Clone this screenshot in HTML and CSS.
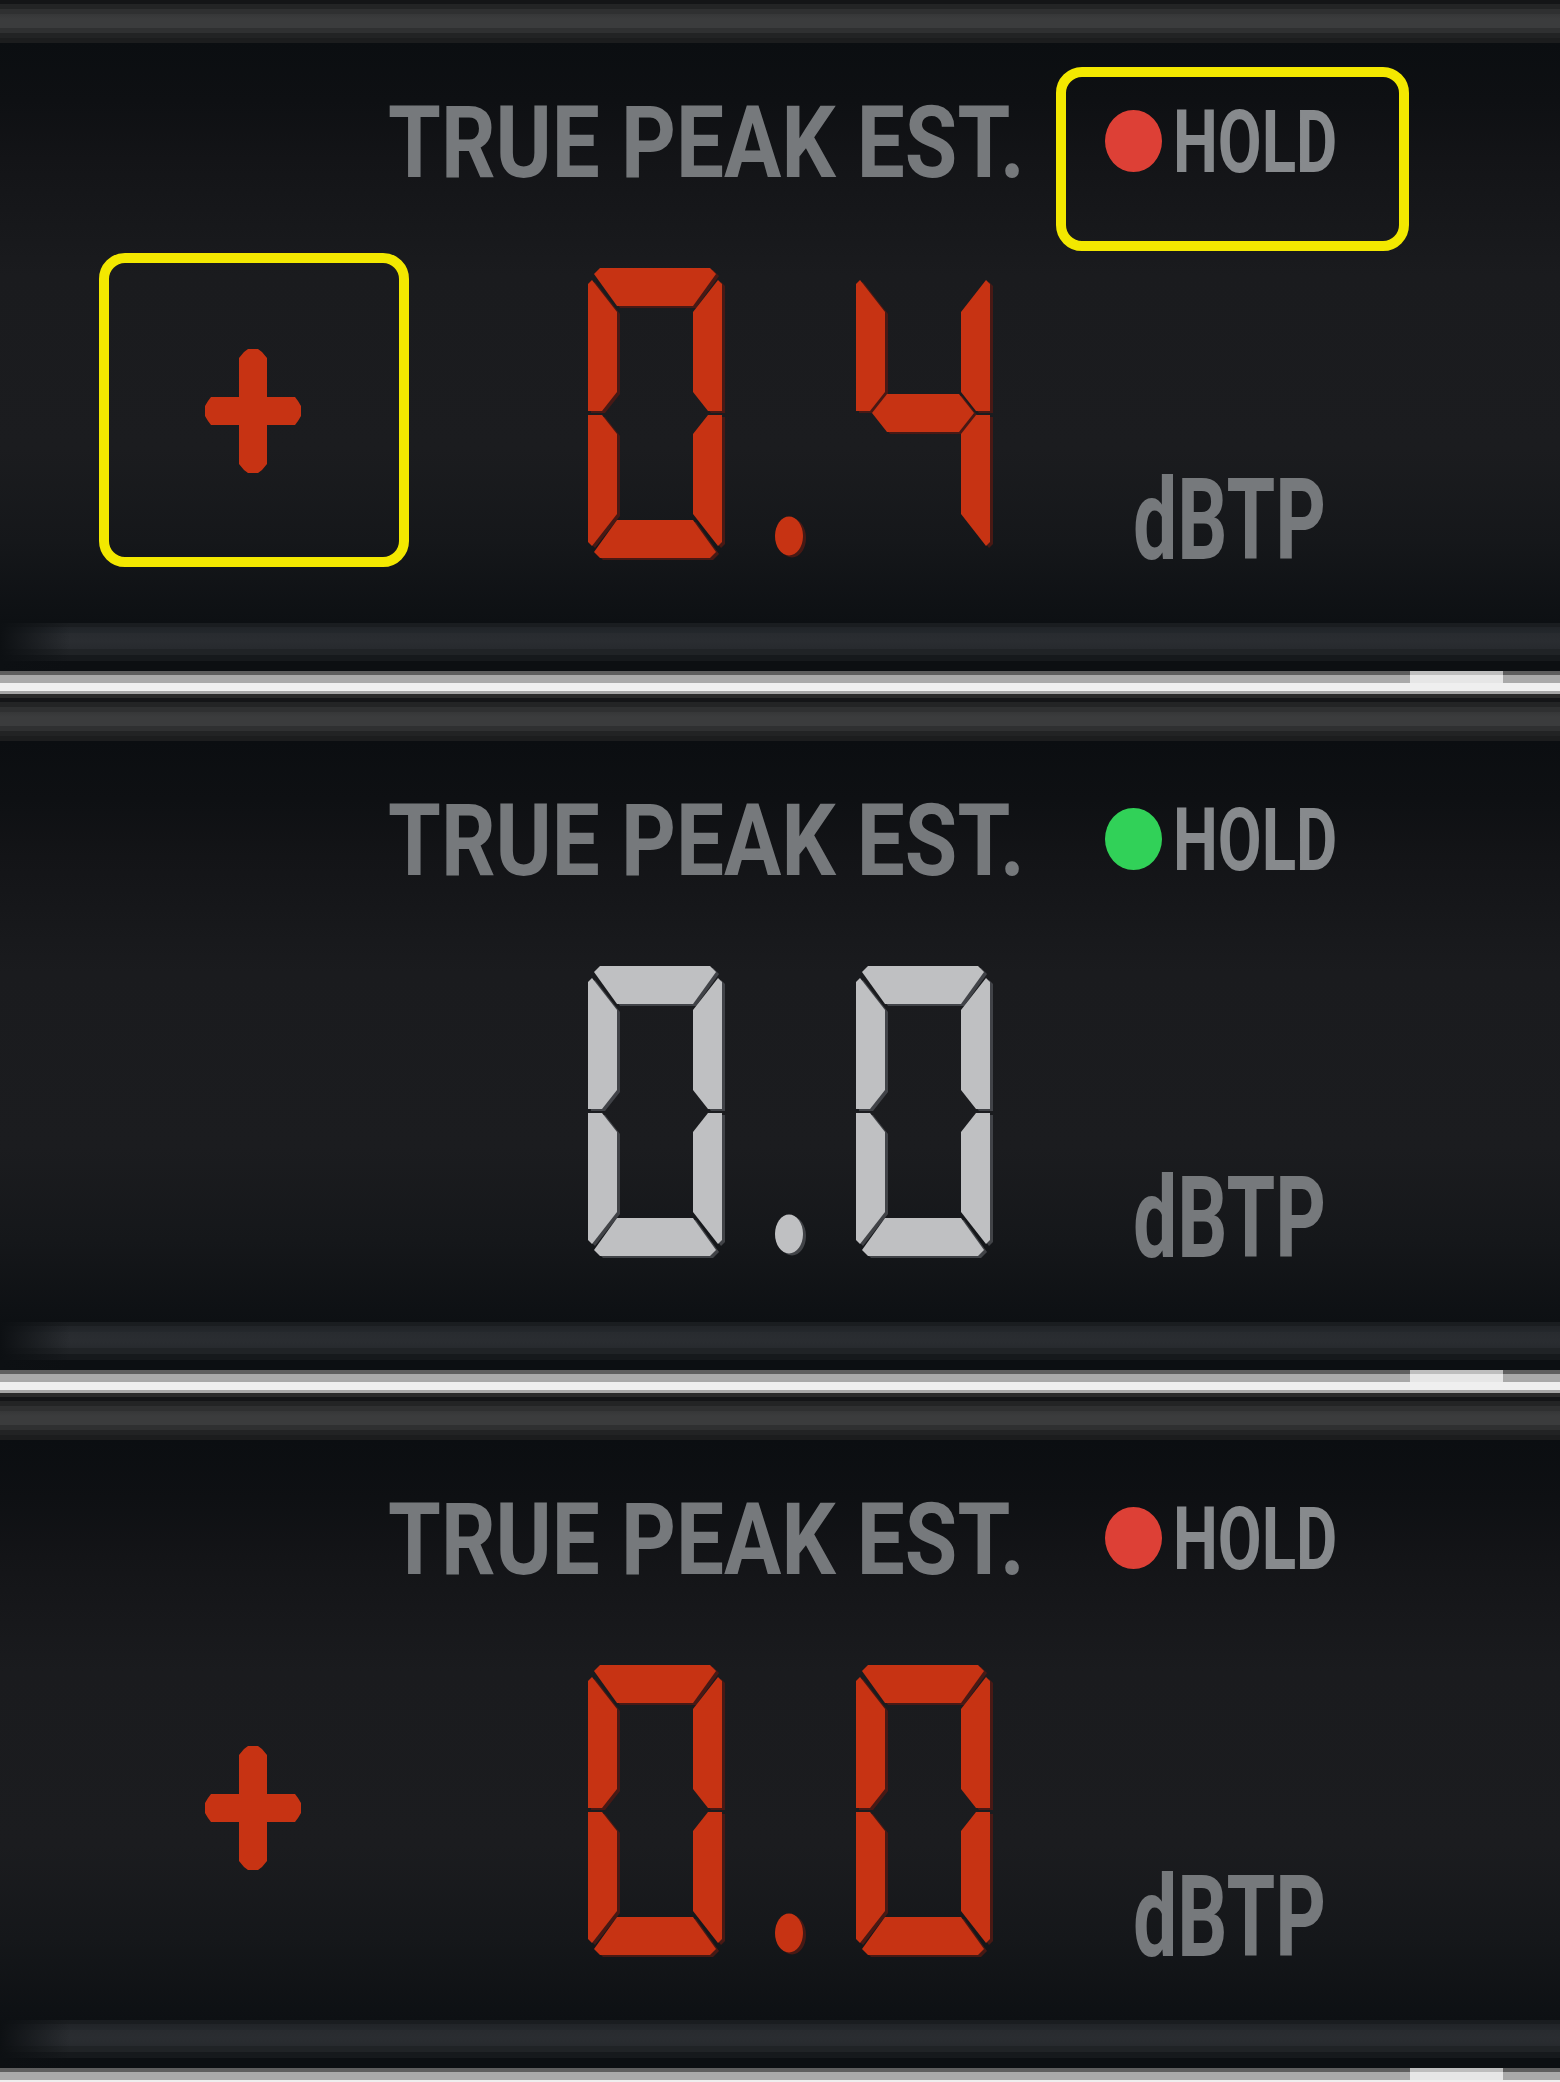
FILE: index.html
```html
<!DOCTYPE html>
<html lang="en">
<head>
<meta charset="utf-8">
<title>True Peak Meter</title>
<link rel="stylesheet" href="styles.css">
</head>
<body>
<svg class="defs" width="0" height="0" aria-hidden="true">
  <defs>
    <polygon id="sa" points="12,0 122,0 128,6 105,38 29,38 6,6"/>
    <polygon id="sb" points="134,16 130,12 105,44 105,124 120,143 134,143"/>
    <polygon id="sc" points="134,274 130,278 105,246 105,166 120,147 134,147"/>
    <polygon id="sd" points="12,290 122,290 128,284 105,252 29,252 6,284"/>
    <polygon id="se" points="0,274 4,278 29,246 29,166 14,147 0,147"/>
    <polygon id="sf" points="0,16 4,12 29,44 29,124 14,143 0,143"/>
    <polygon id="sg" points="16,145 31,126 103,126 118,145 103,164 31,164"/>
    <path id="plus" d="M39,3 L43,0 L53,0 L57,3 L62,9 L62,48 L90,48 L93,52 L96,57 L96,67 L93,72 L90,76 L62,76 L62,115 L57,121 L53,124 L43,124 L39,121 L34,115 L34,76 L6,76 L3,72 L0,67 L0,57 L3,52 L6,48 L34,48 L34,9 Z"/>
  </defs>
</svg>

<main class="stack">
  <section class="panel">
    <div class="bevel"></div>
    <div class="screen">
      <div class="head">
        <div class="label-box"><span class="label">TRUE PEAK EST.</span></div>
        <div class="hold">
          <span class="led led-red"></span>
          <span class="hold-txt">HOLD</span>
        </div>
      </div>
      <div class="readout">
        <svg class="sign red" width="96" height="124" viewBox="0 0 96 124"><use href="#plus"/></svg>
        <svg class="digits red" width="412" height="292" viewBox="0 0 412 292">
          <g><use href="#sa"/><use href="#sb"/><use href="#sc"/><use href="#sd"/><use href="#se"/><use href="#sf"/></g>
          <ellipse cx="201" cy="268" rx="14" ry="19.5"/>
          <g transform="translate(268 0)"><use href="#sb"/><use href="#sc"/><use href="#sf"/><use href="#sg"/></g>
        </svg>
        <div class="unit">dBTP</div>
      </div>
    </div>
    <div class="lip"></div>
    <div class="sep"></div>
    <div class="hl hl-sign"></div>
    <div class="hl hl-hold"></div>
  </section>

  <section class="panel panel-tall">
    <div class="bevel"></div>
    <div class="screen">
      <div class="head">
        <div class="label-box"><span class="label">TRUE PEAK EST.</span></div>
        <div class="hold">
          <span class="led led-green"></span>
          <span class="hold-txt">HOLD</span>
        </div>
      </div>
      <div class="readout">
        <div class="sign sign-empty"></div>
        <svg class="digits white" width="412" height="292" viewBox="0 0 412 292">
          <g><use href="#sa"/><use href="#sb"/><use href="#sc"/><use href="#sd"/><use href="#se"/><use href="#sf"/></g>
          <ellipse cx="201" cy="268" rx="14" ry="19.5"/>
          <g transform="translate(268 0)"><use href="#sa"/><use href="#sb"/><use href="#sc"/><use href="#sd"/><use href="#se"/><use href="#sf"/></g>
        </svg>
        <div class="unit">dBTP</div>
      </div>
    </div>
    <div class="lip"></div>
    <div class="sep"></div>
  </section>

  <section class="panel">
    <div class="bevel"></div>
    <div class="screen">
      <div class="head">
        <div class="label-box"><span class="label">TRUE PEAK EST.</span></div>
        <div class="hold">
          <span class="led led-red"></span>
          <span class="hold-txt">HOLD</span>
        </div>
      </div>
      <div class="readout">
        <svg class="sign red" width="96" height="124" viewBox="0 0 96 124"><use href="#plus"/></svg>
        <svg class="digits red" width="412" height="292" viewBox="0 0 412 292">
          <g><use href="#sa"/><use href="#sb"/><use href="#sc"/><use href="#sd"/><use href="#se"/><use href="#sf"/></g>
          <ellipse cx="201" cy="268" rx="14" ry="19.5"/>
          <g transform="translate(268 0)"><use href="#sa"/><use href="#sb"/><use href="#sc"/><use href="#sd"/><use href="#se"/><use href="#sf"/></g>
        </svg>
        <div class="unit">dBTP</div>
      </div>
    </div>
    <div class="lip"></div>
    <div class="sep"></div>
  </section>
</main>
</body>
</html>
```

FILE: styles.css
```css
html, body {
  margin: 0;
  padding: 0;
  overflow: hidden;
  background: #0c0f12;
}

body {
  width: 1560px;
  font-family: "Roboto", "Liberation Sans", sans-serif;
}

.defs {
  position: absolute;
  width: 0;
  height: 0;
}

.stack {
  display: flex;
  flex-direction: column;
}

.panel {
  position: relative;
  display: flex;
  flex-direction: column;
  flex: none;
}

.bevel {
  height: 43px;
  background: linear-gradient(180deg,
    #141517 0px, #141517 4px,
    #232425 4px, #232425 9px,
    #2f3031 9px, #2f3031 14px,
    #363738 14px, #3b3c3d 19px, #3b3c3d 28px,
    #2f3031 28px, #2f3031 33px,
    #222324 33px, #222324 38px,
    #1c1d1e 38px, #1c1d1e 43px);
}

.screen {
  height: 580px;
  display: flex;
  flex-direction: column;
  background: linear-gradient(180deg,
    #0b0e11 0%, #0e1013 10%, #131417 20%, #1a1b1e 40%,
    #1b1c1f 70%, #15171a 86%, #0d1013 100%);
}

.panel-tall .screen {
  height: 581px;
}

.head {
  display: flex;
  align-items: flex-start;
  margin-top: 49px;
  padding-left: 388px;
  height: 101px;
}

.label-box {
  width: 717px;
  flex: none;
}

.label {
  display: inline-block;
  font-size: 101px;
  line-height: 1;
  font-weight: 700;
  color: #76797c;
  white-space: nowrap;
  transform: scaleX(0.845);
  transform-origin: 0 0;
}

.hold {
  display: flex;
  align-items: flex-start;
}

.led {
  width: 57px;
  height: 62px;
  border-radius: 50%;
  margin-top: 18px;
  margin-right: 11px;
  flex: none;
}

.led-red {
  background: #dd4036;
}

.led-green {
  background: #31d158;
}

.hold-txt {
  display: inline-block;
  margin-top: 7px;
  font-size: 87px;
  line-height: 1;
  font-weight: 700;
  color: #878a8d;
  transform: scaleX(0.73);
  transform-origin: 0 0;
}

.readout {
  display: flex;
  align-items: flex-start;
  margin-top: 75px;
  padding-left: 205px;
}

.sign {
  width: 96px;
  height: 124px;
  margin-top: 81px;
  flex: none;
}

.digits {
  margin-left: 287px;
  flex: none;
  overflow: visible;
}

.red {
  fill: #c73313;
}

.digits.red {
  filter: drop-shadow(3px 2px 0 rgba(78, 26, 20, 0.9));
}

.white {
  fill: #bfc0c2;
}

.digits.white {
  filter: drop-shadow(3px 2px 0 rgba(70, 72, 76, 0.9));
}

.unit {
  margin-left: 133px;
  margin-top: 195px;
  font-size: 114px;
  line-height: 1;
  font-weight: 700;
  color: #76797c;
  transform: scaleX(0.69);
  transform-origin: 0 0;
  white-space: nowrap;
}

.lip {
  height: 48px;
  background:
    linear-gradient(90deg, #0d1013 0px, rgba(13, 16, 19, 0) 70px),
    linear-gradient(180deg,
      #1a1d20 0px, #1a1d20 4px,
      #212428 4px, #24282c 10px,
      #282b2f 10px, #2a2d31 18px, #272a2e 26px,
      #202326 26px, #202326 32px,
      #16191c 32px, #16191c 38px,
      #0c0f12 38px, #0c0f12 48px);
}

.sep {
  position: relative;
  height: 27px;
  background: linear-gradient(180deg,
    #5e5e5e 0px, #5e5e5e 4px,
    #a9a9a9 4px, #a9a9a9 12px,
    #efefef 12px, #efefef 20px,
    #a6a6a6 20px, #a6a6a6 23px,
    #2a2a2a 23px, #2a2a2a 27px);
}

.sep::after {
  content: "";
  position: absolute;
  left: 1410px;
  top: 0;
  width: 93px;
  height: 12px;
  background: linear-gradient(180deg, #bdbdbd 0px, #bdbdbd 4px, #e6e6e6 4px, #e6e6e6 12px);
}

.hl {
  position: absolute;
  border: 10px solid #f3e800;
  border-radius: 26px;
  box-sizing: border-box;
}

.hl-sign {
  left: 99px;
  top: 253px;
  width: 310px;
  height: 314px;
}

.hl-hold {
  left: 1056px;
  top: 67px;
  width: 353px;
  height: 184px;
}
```
